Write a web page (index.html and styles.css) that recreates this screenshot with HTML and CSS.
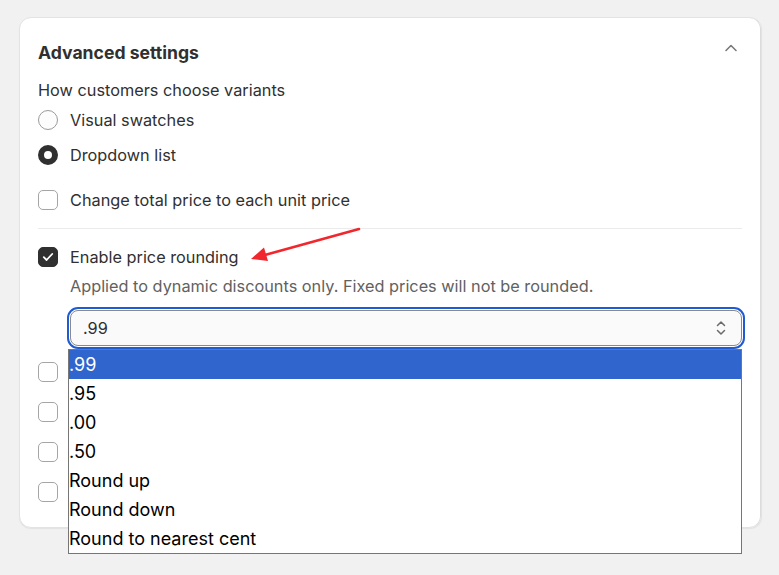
FILE: index.html
```html
<!DOCTYPE html>
<html>
<head>
<meta charset="utf-8">
<link rel="stylesheet" href="styles.css">
</head>
<body>
<div class="card">
  <div class="header">
    <h2 class="title">Advanced settings</h2>
    <svg class="chev" width="14" height="10" viewBox="0 0 14 10"><path d="M2 7.5 L7 2.5 L12 7.5" fill="none" stroke="#7a7a7a" stroke-width="1.6" stroke-linecap="round" stroke-linejoin="round"/></svg>
  </div>
  <div class="label">How customers choose variants</div>
  <div class="row"><span class="radio"></span><span>Visual swatches</span></div>
  <div class="row"><span class="radio on"></span><span>Dropdown list</span></div>
  <div class="row gap"><span class="box"></span><span>Change total price to each unit price</span></div>
  <div class="divider"></div>
  <div class="row gap2 arrow-anchor">
    <span class="box checked"><svg width="12" height="10" viewBox="0 0 12 10"><path d="M1.8 5.2 L4.6 8 L10.2 2" fill="none" stroke="#fff" stroke-width="1.8" stroke-linecap="round" stroke-linejoin="round"/></svg></span>
    <span>Enable price rounding</span>
    <svg class="arrow" width="112" height="36" viewBox="0 0 112 36"><line x1="108" y1="2" x2="12" y2="28.5" stroke="#f2262d" stroke-width="2.6" stroke-linecap="round"/><polygon points="0,32 13,20.5 17,34" fill="#f2262d"/></svg>
  </div>
  <div class="help">Applied to dynamic discounts only. Fixed prices will not be rounded.</div>
  <div class="select-wrap">
    <div class="select">
      <span>.99</span>
      <svg width="12" height="18" viewBox="0 0 12 18"><path d="M2.5 6.5 L6 3 L9.5 6.5 M2.5 11.5 L6 15 L9.5 11.5" fill="none" stroke="#6b6b6b" stroke-width="1.5" stroke-linecap="round" stroke-linejoin="round"/></svg>
    </div>
    <ul class="menu">
      <li class="sel">.99</li>
      <li>.95</li>
      <li>.00</li>
      <li>.50</li>
      <li>Round up</li>
      <li>Round down</li>
      <li>Round to nearest cent</li>
    </ul>
  </div>
  <div class="more">
    <div class="mrow"><span class="box"></span></div>
    <div class="mrow"><span class="box"></span></div>
    <div class="mrow"><span class="box"></span></div>
    <div class="mrow"><span class="box"></span></div>
  </div>
</div>
</body>
</html>
```
FILE: styles.css
```css
* { box-sizing: border-box; }
html, body { margin: 0; padding: 0; }
body {
  background: #f1f1f1;
  font-family: Inter, "Noto Sans", sans-serif;
  color: #303030;
  font-size: 16.3px;
  width: 779px;
  height: 575px;
  overflow: hidden;
}
.card {
  margin: 17px 0 0 19px;
  width: 743px;
  height: 511px;
  background: #fff;
  border: 1px solid #e3e3e3;
  border-radius: 12px;
  box-shadow: 0 1px 1px rgba(0,0,0,0.06), inset -1px 0 0 #dcdcdc;
  padding: 19px 19px 15px 18px;
}
.header {
  display: flex;
  align-items: center;
  justify-content: space-between;
  height: 30px;
}
.title {
  margin: 0;
  font-size: 17.6px;
  font-weight: 650;
  color: #303030;
}
.chev { margin-right: 4px; margin-top: -8px; }
.label {
  margin-top: 11px;
  line-height: 24px;
}
.row {
  display: flex;
  align-items: center;
  height: 35px;
  gap: 12px;
  position: relative;
}
.row.gap { margin-top: 10px; }
.row.gap2 { margin-top: 10px; }
.radio {
  width: 20px;
  height: 20px;
  border-radius: 50%;
  border: 1px solid #9a9a9a;
  background: #fdfdfd;
  flex: none;
}
.radio.on {
  border: 6px solid #303030;
  background: #fff;
}
.box {
  width: 20px;
  height: 20px;
  border-radius: 5px;
  border: 1px solid #a5a5a5;
  background: #fff;
  flex: none;
  display: flex;
  align-items: center;
  justify-content: center;
}
.box.checked {
  background: #303030;
  border-color: #303030;
}
.divider {
  height: 1px;
  background: #ebebeb;
  margin-top: 11px;
}
.arrow {
  position: absolute;
  left: 213px;
  top: -12px;
}
.help {
  margin-left: 32px;
  line-height: 24px;
  color: #616161;
}
.select-wrap {
  position: relative;
  margin: 12px 0 0 32px;
}
.select {
  height: 36px;
  border: 1px solid #8a8a8a;
  border-radius: 8px;
  background: #fafafa;
  outline: 2px solid #1f5bd1;
  outline-offset: 1px;
  display: flex;
  align-items: center;
  justify-content: space-between;
  padding: 0 14px 0 12px;
}
.menu {
  position: absolute;
  left: -2px;
  top: 39px;
  width: 674px;
  margin: 0;
  padding: 0;
  list-style: none;
  background: #fff;
  border: 1px solid #767676;
  z-index: 2;
}
.menu li {
  height: 29px;
  line-height: 29px;
  font-size: 18px;
  color: #000;
}
.menu li.sel {
  background: #2f65cc;
  color: #fff;
}
.more {
  margin-top: 6px;
}
.mrow {
  height: 40px;
  display: flex;
  align-items: center;
}
```
